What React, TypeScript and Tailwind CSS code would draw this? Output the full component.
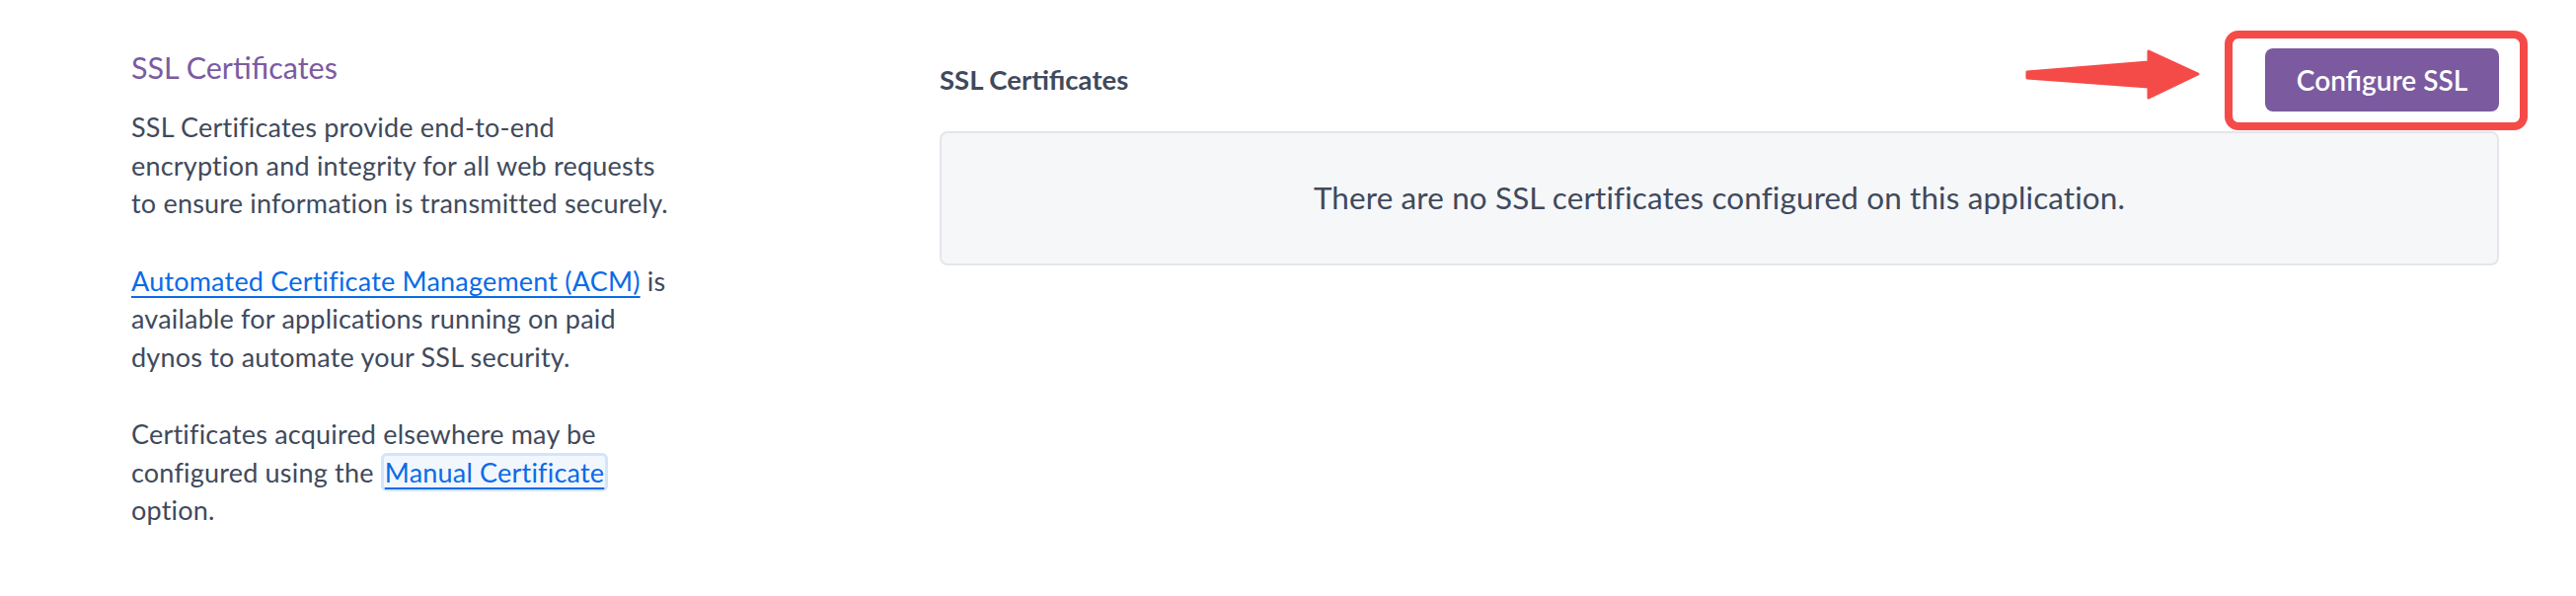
export default function App() {
  return (
    <div
      className="w-[2610px] h-[604px] bg-white flex text-[#3f4a5c]"
      style={{ fontFamily: "Lato, 'Noto Sans', sans-serif" }}
    >
      {/* left description column */}
      <div className="w-[952px] shrink-0 pl-[133px] pt-[48px]">
        <h2 className="text-[30.5px] leading-[40px] text-[#7b5ba1] font-normal">SSL Certificates</h2>
        <div className="mt-[22px] text-[27px] leading-[38.5px] tracking-[0.2px]">
          <p className="mb-[40px]">
            SSL Certificates provide end-to-end
            <br />
            encryption and integrity for all web requests
            <br />
            to ensure information is transmitted securely.
          </p>
          <p className="mb-[40px]">
            <a href="#" className="text-[#0b6be6] underline decoration-2 underline-offset-[5px]">
              Automated Certificate Management (ACM)
            </a>{" "}
            is
            <br />
            available for applications running on paid
            <br />
            dynos to automate your SSL security.
          </p>
          <p>
            Certificates acquired elsewhere may be
            <br />
            configured using the{" "}
            <a
              href="#"
              className="text-[#0b6be6] underline decoration-2 underline-offset-[5px] border-[3px] border-[#d3e4fb] bg-[#f2f7fe] rounded-[6px] px-px"
            >
              Manual Certificate
            </a>
            <br />
            option.
          </p>
        </div>
      </div>

      {/* right panel */}
      <div className="flex-1 pr-[78px] pt-[49px]">
        <div className="flex items-center justify-between">
          <h3 className="text-[27.5px] font-bold leading-[40px]">SSL Certificates</h3>
          <div className="relative">
            <svg
              className="absolute left-[-243px] top-[0px]"
              width="180"
              height="54"
              viewBox="0 0 180 54"
            >
              <polygon
                points="2,24 125,14 125,3 175,26 125,50 125,39 2,30"
                fill="#f54b48"
                stroke="#f54b48"
                strokeWidth="3"
                strokeLinejoin="round"
              />
            </svg>
            <div className="absolute -left-[41px] -top-[18px] -right-[29px] -bottom-[19px] border-[8px] border-[#f54b48] rounded-[14px]" />
            <button className="relative w-[237px] h-[64px] bg-[#7b5a9f] rounded-[8px] text-white text-[28px] font-semibold">
              Configure SSL
            </button>
          </div>
        </div>
        <div className="mt-[20px] h-[136px] border-2 border-[#e3e6ea] bg-[#f6f7f9] rounded-[8px] flex items-center justify-center">
          <p className="text-[31.5px] tracking-[0.1px]">There are no SSL certificates configured on this application.</p>
        </div>
      </div>
    </div>
  );
}
